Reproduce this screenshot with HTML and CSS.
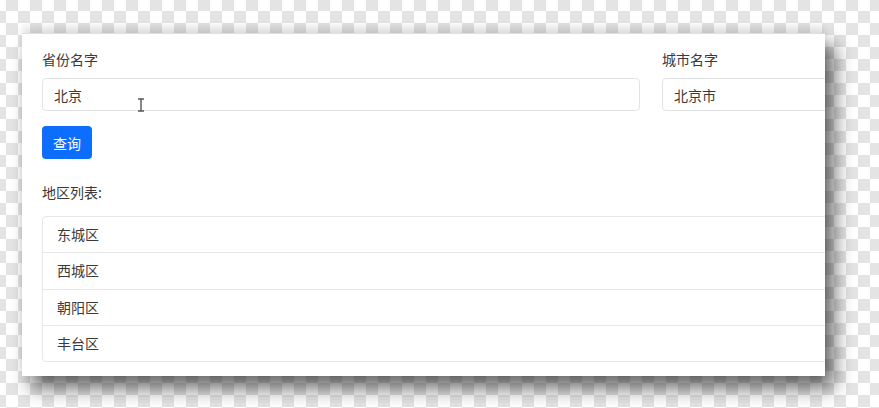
FILE: index.html
```html
<!DOCTYPE html>
<html lang="zh-CN">
<head>
    <meta charset="UTF-8">
    <meta name="viewport" content="width=device-width, initial-scale=1.0">
    <title>地区查询</title>
    <link rel="stylesheet" href="styles.css">
</head>
<body>
    <div class="card">
        <div class="row">
            <div class="field">
                <label>省份名字</label>
                <div class="input-wrap">
                    <input type="text" value="北京">
                    <svg class="cursor" width="8" height="14" viewBox="0 0 8 14">
                        <path d="M1 1h6M1 13h6M4 1v12" stroke="#555" stroke-width="1.4" fill="none"/>
                    </svg>
                </div>
            </div>
            <div class="field">
                <label>城市名字</label>
                <input type="text" value="北京市">
            </div>
        </div>
        <button class="btn">查询</button>
        <div class="list-title">地区列表:</div>
        <ul class="list">
            <li>东城区</li>
            <li>西城区</li>
            <li>朝阳区</li>
            <li>丰台区</li>
        </ul>
    </div>
</body>
</html>
```

FILE: styles.css
```css
body {
    margin: 0;
    width: 879px;
    height: 408px;
    overflow: hidden;
    font-family: "Noto Sans CJK SC", "Noto Sans", sans-serif;
    font-size: 14px;
    color: #3a3a3a;
    background-color: #fff;
    background-image: conic-gradient(#e4e4e4 25%, #fff 0 50%, #e4e4e4 0 75%, #fff 0);
    background-size: 24px 24px;
    background-position: 6px 11px;
}
.card {
    box-sizing: border-box;
    width: 803px;
    height: 343px;
    margin: 33px 0 0 22px;
    padding: 15px 0 0 20px;
    background: #fff;
    border-top: 1px solid #dedede;
    overflow: hidden;
    box-shadow: 0 -7px 6px rgba(0, 0, 0, 0.08), 9px 12px 18px rgba(0, 0, 0, 0.6);
}
.row {
    display: flex;
    gap: 22px;
}
.field {
    flex: 0 0 598px;
}
label {
    display: block;
    line-height: 20px;
    margin-bottom: 9px;
}
.input-wrap {
    position: relative;
}
input {
    box-sizing: border-box;
    width: 100%;
    height: 33px;
    padding: 0 11px;
    border: 1px solid #e1e3e6;
    border-radius: 4px;
    font-family: inherit;
    font-size: 14px;
    color: #3a3a3a;
    outline: none;
}
.cursor {
    position: absolute;
    left: 95px;
    top: 20px;
}
.btn {
    display: block;
    height: 33px;
    margin-top: 15px;
    padding: 0 11px;
    background-color: #0d6efd;
    color: #fff;
    border: none;
    border-radius: 4px;
    font-family: inherit;
    font-size: 14px;
}
.list-title {
    line-height: 20px;
    margin-top: 23px;
}
.list {
    list-style: none;
    margin: 14px 0 0;
    padding: 0;
    width: 1218px;
    border: 1px solid #e6e7e9;
    border-radius: 4px;
}
.list li {
    height: 35.3px;
    line-height: 35px;
    padding-left: 14px;
}
.list li + li {
    border-top: 1px solid #e6e7e9;
}
```
